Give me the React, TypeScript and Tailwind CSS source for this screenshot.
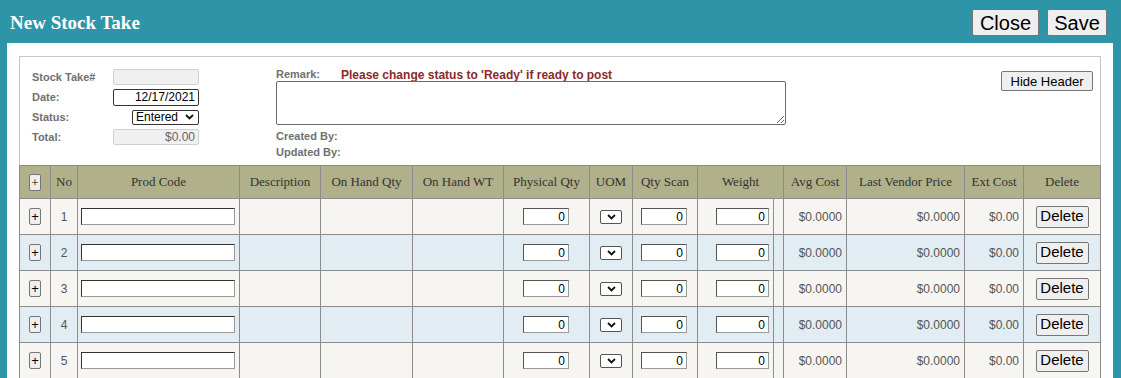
import React from 'react'

const rows = [1, 2, 3, 4, 5]

function Chevron() {
  return (
    <svg width="9" height="6" viewBox="0 0 9 6" className="shrink-0">
      <path d="M1 1 L4.5 4.5 L8 1" fill="none" stroke="#111" strokeWidth="1.8" />
    </svg>
  )
}

function PlusButton() {
  return (
    <button className="mx-auto flex h-[17px] w-[12px] items-center justify-center rounded-[2px] border border-[#767676] bg-[#efefef] text-[13px] leading-none text-black">
      +
    </button>
  )
}

function NumInput({ w }: { w: string }) {
  return (
    <div className={`${w} flex h-[17px] items-center justify-end border border-[#555] border-r-[#999] border-b-[#999] bg-white pr-[3px] text-[12px] text-black`}>
      0
    </div>
  )
}

export default function App() {
  return (
    <div className="h-[378px] overflow-hidden bg-[#2e94a8] font-['Liberation_Sans',Arial,sans-serif]">
      <div className="flex h-[43px] items-center justify-between pl-[10px] pr-[14px]">
        <h1 className="pt-[3px] font-['Liberation_Serif',serif] text-[19px] font-bold text-white">New Stock Take</h1>
        <div className="flex gap-[8px] pt-[2px]">
          <button className="h-[27px] w-[67px] rounded-[2px] border border-[#767676] bg-[#efefef] text-[20px] leading-none text-black">Close</button>
          <button className="h-[27px] w-[60px] rounded-[2px] border border-[#767676] bg-[#efefef] text-[20px] leading-none text-black">Save</button>
        </div>
      </div>

      <div className="ml-[7px] mr-[8px] bg-white px-[12px] pt-[13px]">
        <div className="flex h-[109px] border-x border-t border-[#c8c8c8] pl-[12px] pr-[7px] pt-[12px]">
          <div className="flex w-[244px] flex-col gap-[4px] text-[11px] font-bold text-[#707070]">
            <div className="flex h-[16px] items-center">
              <span className="w-[81px]">Stock Take#</span>
              <div className="h-[16px] w-[86px] rounded-[2px] border border-[#d0d0d0] bg-[#f0f0f0]" />
            </div>
            <div className="flex h-[16px] items-center">
              <span className="w-[81px]">Date:</span>
              <div className="flex h-[17px] w-[86px] items-center justify-end rounded-[2px] border border-[#333] bg-white pr-[3px] text-[12px] font-normal text-black">12/17/2021</div>
            </div>
            <div className="flex h-[16px] items-center">
              <span className="w-[100px]">Status:</span>
              <div className="flex h-[15px] w-[67px] items-center justify-between rounded-[2px] border border-[#333] bg-white pl-[3px] pr-[4px] text-[12px] font-normal text-black">
                Entered
                <Chevron />
              </div>
            </div>
            <div className="flex h-[16px] items-center">
              <span className="w-[81px]">Total:</span>
              <div className="flex h-[16px] w-[86px] items-center justify-end rounded-[2px] border border-[#d0d0d0] bg-[#f0f0f0] pr-[3px] text-[12px] font-normal text-[#666]">$0.00</div>
            </div>
          </div>

          <div className="flex w-[511px] flex-col text-[11px] font-bold text-[#707070]">
            <div className="-mt-[1px] flex h-[13px] items-center">
              <span className="w-[65px]">Remark:</span>
              <span className="text-[12px] text-[#8b2a2a]">Please change status to 'Ready' if ready to post</span>
            </div>
            <textarea className="h-[44px] w-[510px] resize rounded-[2px] border border-[#6b6b6b] bg-white" />
            <div className="mt-[3px] leading-[16px]">Created By:</div>
            <div className="leading-[16px]">Updated By:</div>
          </div>

          <div className="flex flex-1 justify-end pt-[2px]">
            <button className="h-[20px] w-[92px] rounded-[2px] border border-[#767676] bg-[#efefef] text-[13px] text-black">Hide Header</button>
          </div>
        </div>

        <table className="w-full table-fixed border-collapse border border-[#8c8c8c] text-[12px] text-[#555]">
          <colgroup>
            <col className="w-[31px]" />
            <col className="w-[27px]" />
            <col className="w-[162px]" />
            <col className="w-[81px]" />
            <col className="w-[92px]" />
            <col className="w-[91px]" />
            <col className="w-[86px]" />
            <col className="w-[43px]" />
            <col className="w-[65px]" />
            <col className="w-[76px]" />
            <col className="w-[10px]" />
            <col className="w-[63px]" />
            <col className="w-[118px]" />
            <col className="w-[59px]" />
            <col />
          </colgroup>
          <thead>
            <tr className="h-[33px] bg-[#b0b08a] font-['Liberation_Serif',serif] text-[13px] text-[#333]">
              <th className="border border-[#8c8c8c] font-normal"><PlusButton /></th>
              <th className="border border-[#8c8c8c] font-normal">No</th>
              <th className="border border-[#8c8c8c] font-normal">Prod Code</th>
              <th className="border border-[#8c8c8c] font-normal">Description</th>
              <th className="border border-[#8c8c8c] font-normal">On Hand Qty</th>
              <th className="border border-[#8c8c8c] font-normal">On Hand WT</th>
              <th className="border border-[#8c8c8c] font-normal">Physical Qty</th>
              <th className="border border-[#8c8c8c] font-normal">UOM</th>
              <th className="border border-[#8c8c8c] font-normal">Qty Scan</th>
              <th colSpan={2} className="border border-[#8c8c8c] font-normal">Weight</th>
              <th className="border border-[#8c8c8c] font-normal">Avg Cost</th>
              <th className="border border-[#8c8c8c] font-normal">Last Vendor Price</th>
              <th className="border border-[#8c8c8c] font-normal">Ext Cost</th>
              <th className="border border-[#8c8c8c] font-normal">Delete</th>
            </tr>
          </thead>
          <tbody>
            {rows.map((n) => (
              <tr key={n} className={`h-[36px] ${n % 2 === 0 ? 'bg-[#e1ecf3]' : 'bg-[#f6f5f1]'}`}>
                <td className="border border-[#8c8c8c]"><PlusButton /></td>
                <td className="border border-[#8c8c8c] text-center">{n}</td>
                <td className="border border-[#8c8c8c] px-[3px]">
                  <div className="h-[17px] w-[154px] border border-[#333] border-r-[#999] border-b-[#999] bg-white" />
                </td>
                <td className="border border-[#8c8c8c]" />
                <td className="border border-[#8c8c8c]" />
                <td className="border border-[#8c8c8c]" />
                <td className="border border-[#8c8c8c]">
                  <div className="ml-[19px]"><NumInput w="w-[46px]" /></div>
                </td>
                <td className="border border-[#8c8c8c]">
                  <div className="ml-[10px] flex h-[14px] w-[22px] items-center justify-center rounded-[2px] border border-[#555] bg-white">
                    <Chevron />
                  </div>
                </td>
                <td className="border border-[#8c8c8c]">
                  <div className="ml-[8px]"><NumInput w="w-[46px]" /></div>
                </td>
                <td className="border border-[#8c8c8c]">
                  <div className="ml-[18px]"><NumInput w="w-[53px]" /></div>
                </td>
                <td className="border border-[#8c8c8c]" />
                <td className="border border-[#8c8c8c] pr-[4px] text-right">$0.0000</td>
                <td className="border border-[#8c8c8c] pr-[4px] text-right">$0.0000</td>
                <td className="border border-[#8c8c8c] pr-[4px] text-right">$0.00</td>
                <td className="border border-[#8c8c8c]">
                  <button className="mx-auto flex h-[22px] w-[53px] items-center justify-center rounded-[2px] border border-[#767676] bg-[#efefef] text-[15px] text-black">Delete</button>
                </td>
              </tr>
            ))}
          </tbody>
        </table>
      </div>
    </div>
  )
}
